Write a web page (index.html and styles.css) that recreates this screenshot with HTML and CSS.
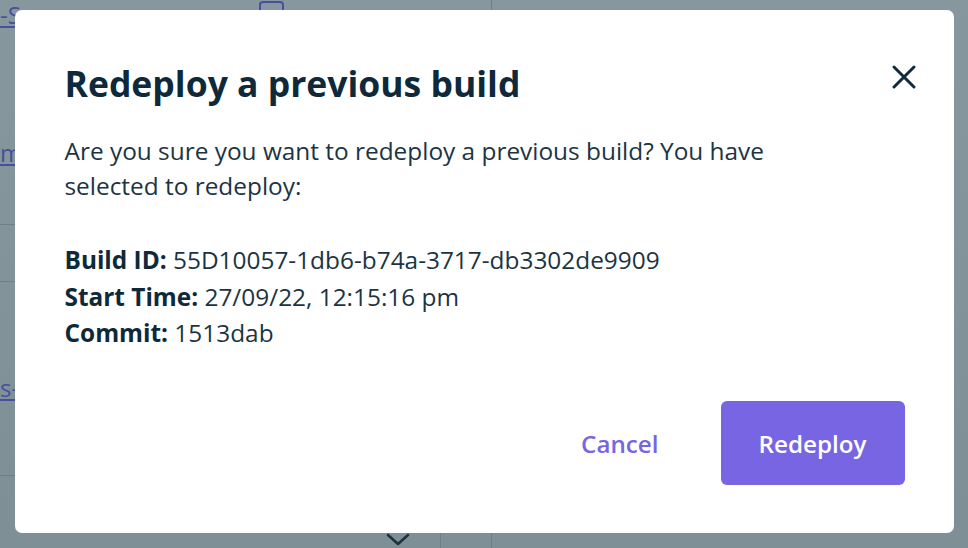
FILE: index.html
```html
<!DOCTYPE html>
<html lang="en">
<head>
<meta charset="utf-8">
<title>Redeploy a previous build</title>
<link rel="stylesheet" href="styles.css">
</head>
<body>
<div class="page">
  <div class="page-main">
    <div class="row row-top">
      <a class="link">-S</a>
      <span class="square"></span>
    </div>
    <div class="row row-m">
      <a class="link">m</a>
    </div>
    <div class="row row-line1"></div>
    <div class="row row-line2"></div>
    <div class="row row-s">
      <a class="link">s-</a>
    </div>
    <div class="row row-bottom">
      <svg class="chev" width="26" height="14" viewBox="0 0 26 14"><path d="M3 3 L13 12 L23 3" fill="none" stroke="#1c3442" stroke-width="2.6" stroke-linecap="round" stroke-linejoin="round"/></svg>
      <span class="vline"></span>
    </div>
  </div>
  <div class="page-side"></div>
</div>

<div class="overlay">
  <div class="modal" role="dialog" aria-labelledby="modal-title">
    <div class="modal-head">
      <h2 id="modal-title" class="modal-title">Redeploy a previous build</h2>
      <button class="close" aria-label="Close">
        <svg width="26" height="26" viewBox="0 0 26 26"><path d="M3 3 L23 23 M23 3 L3 23" stroke="#0f2a3a" stroke-width="3" stroke-linecap="round"/></svg>
      </button>
    </div>
    <p class="modal-text">Are you sure you want to redeploy a previous build? You have selected to redeploy:</p>
    <ul class="details">
      <li><strong>Build ID:</strong> 55D10057-1db6-b74a-3717-db3302de9909</li>
      <li><strong>Start Time:</strong> 27/09/22, 12:15:16 pm</li>
      <li><strong>Commit:</strong> 1513dab</li>
    </ul>
    <div class="actions">
      <button class="btn btn-text">Cancel</button>
      <button class="btn btn-primary">Redeploy</button>
    </div>
  </div>
</div>
</body>
</html>
```

FILE: styles.css
```css
* { box-sizing: border-box; }

html, body {
  margin: 0;
  height: 100%;
}

body {
  background: linear-gradient(#87979e, #7f8f96);
  font-family: "Open Sans", "Noto Sans", sans-serif;
  overflow: hidden;
}

/* background page (dimmed) */
.page {
  display: flex;
  height: 548px;
}

.page-main {
  width: 492px;
  border-right: 1px solid #6f7f88;
  display: flex;
  flex-direction: column;
}

.page-side { flex: 1; }

.link {
  color: #4b4d9e;
  text-decoration: underline;
  font-size: 24px;
  line-height: 1;
}

.row { display: flex; align-items: flex-end; }

.row-top {
  height: 30px;
  align-items: center;
  gap: 238px;
}

.square {
  width: 25px;
  height: 20px;
  border: 2px solid #4b4d9e;
  border-radius: 4px;
  margin-top: -8px;
}

.row-m {
  height: 135px;
  padding-bottom: 0;
}

.row-line1 {
  height: 60px;
  border-bottom: 1px solid #6f7f88;
}

.row-line2 {
  height: 57px;
  border-bottom: 1px solid #6f7f88;
}

.row-s {
  height: 194px;
  border-bottom: 1px solid #6f7f88;
  padding-bottom: 75px;
}

.row-bottom {
  flex: 1;
  align-items: flex-end;
  padding-left: 385px;
}

.chev { margin-bottom: 2px; }

.vline {
  width: 1px;
  height: 20px;
  background: #6f7f88;
  margin-left: 29px;
}

/* overlay + modal */
.overlay {
  position: fixed;
  inset: 0;
  display: flex;
  justify-content: center;
  align-items: flex-start;
  padding-top: 10px;
}

.modal {
  width: 939px;
  height: 523px;
  background: #fff;
  border-radius: 7px;
  padding: 49px 49px 48px 50px;
  display: flex;
  flex-direction: column;
  color: #1c3442;
}

.modal-head {
  display: flex;
  justify-content: space-between;
  align-items: flex-start;
}

.modal-title {
  margin: 0;
  font-size: 35.5px;
  font-weight: 700;
  line-height: 48px;
  color: #0e2939;
}

.close {
  background: none;
  border: 0;
  padding: 0;
  width: 26px;
  height: 26px;
  margin-top: 5px;
  margin-right: -12px;
  cursor: pointer;
}

.close svg { display: block; }

.modal-text {
  margin: 26px 0 0;
  font-size: 24.4px;
  line-height: 35px;
  max-width: 760px;
}

.details {
  list-style: none;
  margin: 39px 0 0;
  padding: 0;
  font-size: 24.4px;
  line-height: 36.5px;
}

.details strong {
  font-weight: 700;
  color: #0e2939;
}

.actions {
  margin-top: auto;
  display: flex;
  justify-content: flex-end;
  align-items: center;
  gap: 62px;
}

.btn {
  font-family: inherit;
  font-size: 24.2px;
  font-weight: 600;
  border: 0;
  cursor: pointer;
}

.btn-text {
  background: none;
  color: #7765e3;
  padding: 0;
}

.btn-primary {
  background: #7765e3;
  color: #fff;
  width: 184px;
  height: 84px;
  border-radius: 6px;
}
```
